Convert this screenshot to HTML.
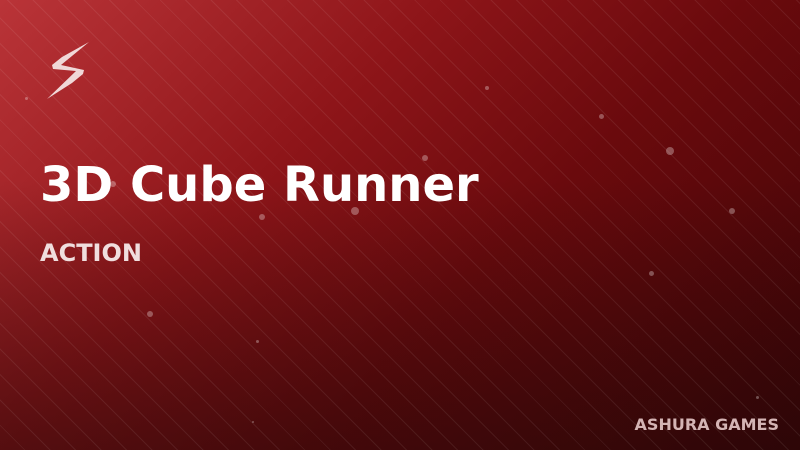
<!DOCTYPE html><html><head><style>
html,body{margin:0;padding:0}
body{width:800px;height:450px;overflow:hidden;position:relative;font-family:"DejaVu Sans","Liberation Sans",sans-serif;
background:linear-gradient(135deg,#ba3438 0%,#8e1519 35%,#6a0a0d 60%,#3c0406 100%)}
.dark{position:absolute;inset:0;background:linear-gradient(to bottom,rgba(30,10,10,0) 0%,rgba(30,10,10,0) 40%,rgba(30,8,8,.5) 100%)}
.lines{position:absolute;inset:0;background:repeating-linear-gradient(45deg,rgba(255,255,255,0) 0 17px,rgba(255,255,255,.07) 17px 18px)}
.d{position:absolute;border-radius:50%;background:rgba(255,255,255,.3)}
h1{position:absolute;left:40px;top:156px;margin:0;font-size:48px;font-weight:bold;color:#fff;line-height:58px;white-space:nowrap}
.cat{position:absolute;left:40px;top:238px;font-size:24px;font-weight:bold;color:#f0dede;line-height:30px}
.brand{position:absolute;right:21px;top:415px;font-size:16px;font-weight:bold;color:#d4b4b4;line-height:20px}
</style></head><body>
<div class="dark"></div><div class="lines"></div>
<svg style="position:absolute;left:0;top:0" width="120" height="120"><polygon points="89,42 62,57 52,65 53,69 76,71 47,99 72,83 83,74 84,70 61,65" fill="#f0d8d8"/></svg>
<div class="d" style="left:25px;top:97px;width:3px;height:3px"></div>
<div class="d" style="left:110px;top:181px;width:6px;height:6px"></div>
<div class="d" style="left:259px;top:214px;width:6px;height:6px"></div>
<div class="d" style="left:351px;top:207px;width:8px;height:8px"></div>
<div class="d" style="left:422px;top:155px;width:6px;height:6px"></div>
<div class="d" style="left:485px;top:86px;width:4px;height:4px"></div>
<div class="d" style="left:599px;top:114px;width:5px;height:5px"></div>
<div class="d" style="left:666px;top:147px;width:8px;height:8px"></div>
<div class="d" style="left:729px;top:208px;width:6px;height:6px"></div>
<div class="d" style="left:649px;top:271px;width:5px;height:5px"></div>
<div class="d" style="left:147px;top:311px;width:6px;height:6px"></div>
<div class="d" style="left:256px;top:340px;width:3px;height:3px"></div>
<div class="d" style="left:252px;top:421px;width:2px;height:2px"></div>
<div class="d" style="left:756px;top:396px;width:3px;height:3px"></div>
<h1>3D Cube Runner</h1>
<div class="cat">ACTION</div>
<div class="brand">ASHURA GAMES</div>
</body></html>
